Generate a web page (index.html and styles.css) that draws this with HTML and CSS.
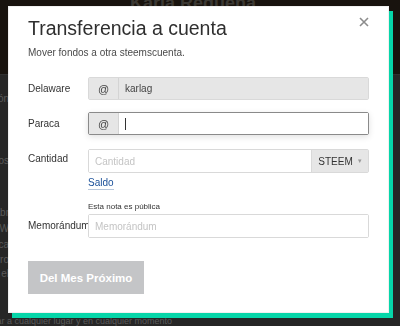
FILE: index.html
```html
<!DOCTYPE html>
<html lang="es">
<head>
  <meta charset="UTF-8">
  <meta name="viewport" content="width=device-width, initial-scale=1.0">
  <title>Transferencia a cuenta</title>
  <link rel="stylesheet" href="styles.css">
</head>
<body>
  <div class="page">
    <div class="page-head">
      <h1>Karla Reguena</h1>
    </div>
    <div class="page-body">
      <p class="line l1">Publicaciones Comentarios Billetera Configuración</p>
      <p class="line l2">Saldos y depósitos</p>
      <p class="line l3">Monedas negociables que se pueden transferir a otras cuentas en cualquier momento. Se pueden convertir en Steem Power en un proceso llamado potenciar en cualquier momento. Las cuentas hábr</p>
      <p class="line l4">Steem Power W</p>
      <p class="line l5">Influencia de la publica</p>
      <p class="line l6">Dólares Steem ahorro</p>
      <p class="line l7">Tokens respaldados por el</p>
      <p class="line l8">Puedes enviar a cualquier lugar y en cualquier momento</p>
    </div>
  </div>

  <div class="modal">
    <svg class="close" width="10" height="10" viewBox="0 0 10 10">
      <path d="M1 1 L9 9 M9 1 L1 9" stroke="#8c8c8c" stroke-width="1.6" fill="none"/>
    </svg>
    <h2 class="modal-title">Transferencia a cuenta</h2>
    <p class="modal-sub">Mover fondos a otra steemscuenta.</p>

    <form class="transfer">
      <div class="row row-from">
        <label class="label">Delaware</label>
        <div class="group">
          <span class="addon">@</span>
          <input class="field field-disabled" type="text" value="karlag" disabled>
        </div>
      </div>

      <div class="row row-to">
        <label class="label">Paraca</label>
        <div class="group group-focus">
          <span class="addon">@</span>
          <div class="field field-focus"><span class="caret"></span></div>
        </div>
      </div>

      <div class="row row-amount">
        <label class="label">Cantidad</label>
        <div class="stack">
          <div class="group">
            <input class="field" type="text" placeholder="Cantidad">
            <span class="select">STEEM <span class="arrow">&#9662;</span></span>
          </div>
          <a class="balance" href="#">Saldo</a>
        </div>
      </div>

      <div class="row row-memo">
        <label class="label">Memorándum</label>
        <div class="stack">
          <small class="note">Esta nota es pública</small>
          <div class="group">
            <input class="field" type="text" placeholder="Memorándum">
          </div>
        </div>
      </div>

      <button class="submit" type="button" disabled>Del Mes Próximo</button>
    </form>
  </div>
</body>
</html>
```

FILE: styles.css
```css
* {
  box-sizing: border-box;
}
html, body {
  margin: 0;
  height: 100%;
}
body {
  font-family: "Liberation Sans", Arial, sans-serif;
  background-color: #262626;
  overflow: hidden;
}

/* page behind the dialog */
.page-head {
  height: 75px;
  background-color: #18130e;
  border-bottom: 1px solid #303030;
  text-align: center;
  padding-right: 14px;
  overflow: hidden;
}
.page-head h1 {
  margin: -3px 0 0 0;
  font-size: 18px;
  line-height: 12px;
  color: #3b3833;
  font-weight: bold;
}
.page-body {
  padding-top: 17px;
}
.line {
  display: flex;
  justify-content: flex-end;
  width: 9px;
  overflow: hidden;
  margin: 0;
  white-space: nowrap;
  font-size: 10px;
  line-height: 14px;
  color: #5a5a5a;
}
.l2 { margin-top: 48px; }
.l3 { margin-top: 38px; }
.l4 { margin-top: 2px; }
.l5 { margin-top: 2px; }
.l6 { margin-top: 1px; }
.l8 {
  width: 172px;
  margin-top: 33px;
  font-size: 9px;
}

/* dialog */
.modal {
  position: fixed;
  top: 6px;
  left: 8px;
  width: 381px;
  height: 307px;
  background: white;
  border: 1px solid #f0f0f0;
  box-shadow: 4px 5px 0 #06d6a9;
  padding: 9px 19px 0 19px;
}
.close {
  position: absolute;
  top: 10px;
  right: 19px;
}
.modal-title {
  margin: 0;
  font-size: 19.5px;
  font-weight: normal;
  line-height: 24px;
  color: #2f2f2f;
}
.modal-sub {
  margin: 6px 0 0 0;
  font-size: 10px;
  line-height: 14px;
  color: #4a4a4a;
}
.transfer {
  margin-top: 17px;
}
.row {
  display: flex;
  align-items: center;
}
.row-from { margin-bottom: 12px; }
.row-to { margin-bottom: 14px; }
.row-amount { margin-bottom: 12px; }
.label {
  width: 60px;
  flex-shrink: 0;
  font-size: 10px;
  line-height: 14px;
  color: #333;
  white-space: nowrap;
}
.group {
  flex: 1;
  display: flex;
  height: 23px;
  border: 1px solid #d9d9d9;
  border-radius: 2px;
  background: white;
}
.stack {
  flex: 1;
  display: flex;
  flex-direction: column;
}
.stack .group {
  flex: none;
}
.addon {
  width: 30px;
  display: flex;
  align-items: center;
  justify-content: center;
  background-color: #e6e6e6;
  border-right: 1px solid #d4d4d4;
  font-size: 11px;
  color: #444;
}
.field {
  flex: 1;
  min-width: 0;
  border: none;
  outline: none;
  padding: 0 5px 0 6px;
  font-family: inherit;
  font-size: 10px;
  color: #333;
  background: white;
}
.field::placeholder {
  color: #c4c4c4;
}
.field-disabled {
  background-color: #e6e6e6;
  color: #444;
}
.group-focus {
  border-color: #8a8a8a;
  box-shadow: 0 2px 6px rgba(0,0,0,0.12);
}
.field-focus {
  display: flex;
  align-items: center;
}
.caret {
  width: 1px;
  height: 12px;
  background: #333;
}
.row-amount {
  align-items: flex-start;
}
.row-amount .label {
  margin-top: 3px;
}
.row-amount .group {
  height: 24px;
}
.select {
  width: 57px;
  display: flex;
  align-items: center;
  justify-content: center;
  gap: 5px;
  background-color: #e6e6e6;
  border-left: 1px solid #d9d9d9;
  font-size: 10px;
  color: #333;
}
.arrow {
  font-size: 7px;
  color: #999;
}
.balance {
  margin-top: 4px;
  font-size: 10px;
  line-height: 12px;
  color: #1a5099;
  text-decoration: none;
  border-bottom: 1px solid #b9c8dc;
  align-self: flex-start;
}
.row-memo .label {
  margin-top: 12px;
}
.row-memo .group {
  height: 24px;
}
.note {
  font-size: 8px;
  line-height: 10px;
  color: #333;
  margin-bottom: 2px;
}
.submit {
  margin-top: 23px;
  width: 116px;
  height: 33px;
  padding: 0;
  border: none;
  background-color: #c4c5c7;
  color: white;
  font-family: inherit;
  font-weight: bold;
  font-size: 11.5px;
  white-space: nowrap;
}
```
